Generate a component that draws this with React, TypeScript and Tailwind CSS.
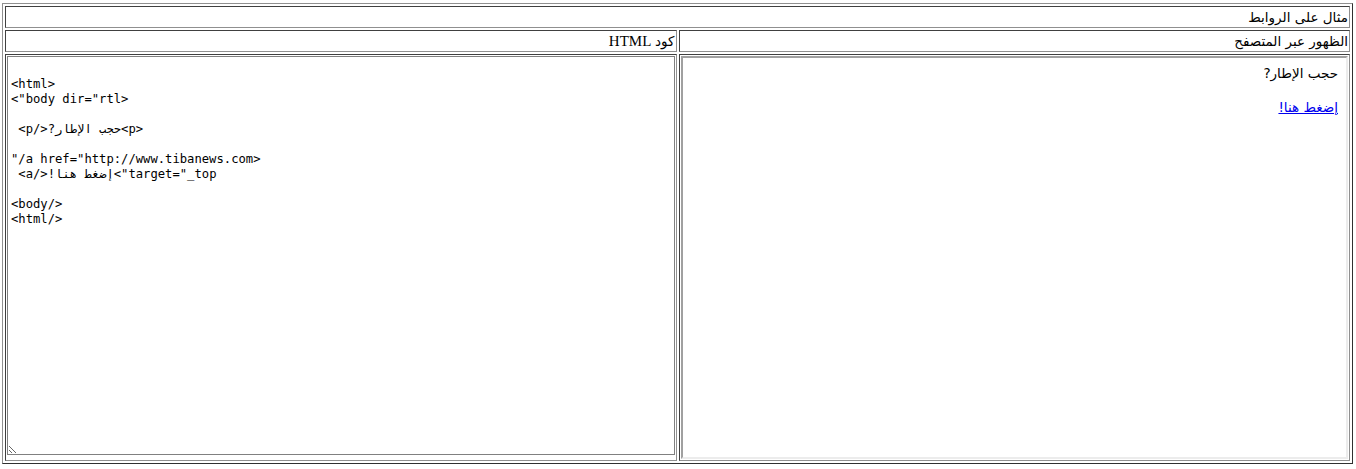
const code = `
<html>
<body dir="rtl">

<p>حجب الإطار?</p> 

<a href="http://www.tibanews.com/"
target="_top">إضغط هنا!</a> 

</body>
</html>`;

const cell =
  "border border-solid border-t-[#404040] border-l-[#404040] border-b-[#909090] border-r-[#909090] p-px";

const ar = "text-[13.5px] font-['DejaVu_Sans',sans-serif]";

export default function App() {
  return (
    <div dir="rtl" className="pl-[3px] pr-[3px] pt-[3px] bg-white">
      <table className="w-[1351px] table-fixed border-separate border-spacing-[2px] border border-solid border-t-[#909090] border-l-[#909090] border-b-[#303030] border-r-[#303030] font-['Liberation_Serif','DejaVu_Sans',serif] text-[15px] leading-[18px] text-black">
        <tbody>
          <tr>
            <td colSpan={2} className={`${cell} text-right`}>
              <span className={ar}>مثال على الروابط</span>
            </td>
          </tr>
          <tr>
            <td className={`${cell} w-1/2 text-right`}>
              <span className={ar}>الظهور عبر المتصفح</span>
            </td>
            <td className={`${cell} w-1/2 text-right`}>
              <span className={ar}>كود</span> HTML
            </td>
          </tr>
          <tr>
            <td className={`${cell} align-top`}>
              <div className="h-[403px] border-2 border-solid border-t-[#a0a0a0] border-l-[#a0a0a0] border-b-[#ececec] border-r-[#ececec] px-[8px] pt-[6px]">
                <p className="leading-[18px]">
                  <span className={ar}>حجب الإطار?</span>
                </p>
                <p className="mt-[16px] leading-[18px]">
                  <a href="#" className={`${ar} text-[#0000ee] underline`}>
                    إضغط هنا!
                  </a>
                </p>
              </div>
            </td>
            <td className={`${cell} align-top`}>
              <textarea
                dir="rtl"
                readOnly
                defaultValue={code}
                className="block h-[399px] w-full resize-y overflow-auto whitespace-pre border border-solid border-[#808080] pl-[3px] pr-[2px] pt-[5px] text-left font-['DejaVu_Sans_Mono',monospace] text-[12.2px] leading-[15px] text-black outline-none"
              />
            </td>
          </tr>
        </tbody>
      </table>
    </div>
  );
}
